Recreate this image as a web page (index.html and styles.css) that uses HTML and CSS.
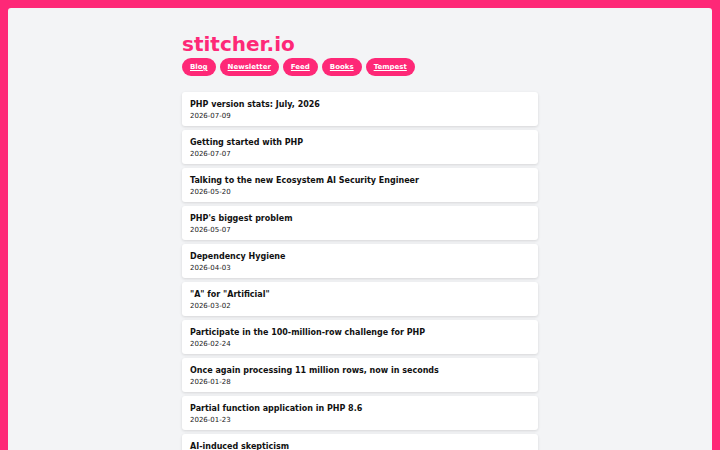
FILE: index.html
```html
<!DOCTYPE html>
<html lang="en">
<head>
    <meta charset="UTF-8">
    <meta name="viewport" content="width=device-width, initial-scale=1.0">
    <title>stitcher.io</title>
    <link rel="stylesheet" href="styles.css">
</head>
<body>
    <div class="frame">
        <div class="container">
            <header>
                <h1>stitcher.io</h1>
                <nav class="menu">
                    <a href="#">Blog</a>
                    <a href="#">Newsletter</a>
                    <a href="#">Feed</a>
                    <a href="#">Books</a>
                    <a href="#">Tempest</a>
                </nav>
            </header>

            <div class="posts">
                <a class="post" href="#">
                    <div class="post-title">PHP version stats: July, 2026</div>
                    <div class="post-date">2026-07-09</div>
                </a>
                <a class="post" href="#">
                    <div class="post-title">Getting started with PHP</div>
                    <div class="post-date">2026-07-07</div>
                </a>
                <a class="post" href="#">
                    <div class="post-title">Talking to the new Ecosystem AI Security Engineer</div>
                    <div class="post-date">2026-05-20</div>
                </a>
                <a class="post" href="#">
                    <div class="post-title">PHP's biggest problem</div>
                    <div class="post-date">2026-05-07</div>
                </a>
                <a class="post" href="#">
                    <div class="post-title">Dependency Hygiene</div>
                    <div class="post-date">2026-04-03</div>
                </a>
                <a class="post" href="#">
                    <div class="post-title">"A" for "Artificial"</div>
                    <div class="post-date">2026-03-02</div>
                </a>
                <a class="post" href="#">
                    <div class="post-title">Participate in the 100-million-row challenge for PHP</div>
                    <div class="post-date">2026-02-24</div>
                </a>
                <a class="post" href="#">
                    <div class="post-title">Once again processing 11 million rows, now in seconds</div>
                    <div class="post-date">2026-01-28</div>
                </a>
                <a class="post" href="#">
                    <div class="post-title">Partial function application in PHP 8.6</div>
                    <div class="post-date">2026-01-23</div>
                </a>
                <a class="post" href="#">
                    <div class="post-title">AI-induced skepticism</div>
                    <div class="post-date">2026-01-12</div>
                </a>
            </div>
        </div>
    </div>
</body>
</html>
```

FILE: styles.css
```css
*{margin:0;padding:0;box-sizing:border-box;font-family:"DejaVu Sans",Verdana,sans-serif}
body{background:#fe2877;padding:8px;min-height:100vh}
.frame{background:#f3f4f6;border-radius:3px;min-height:600px;padding:24px 16px 40px}
.container{max-width:356px;margin:0 auto}
header{margin-bottom:16px}
h1{font-size:20px;font-weight:bold;color:#fe2877;line-height:24px;margin-bottom:2px}
.menu{display:flex;gap:4px}
.menu a{display:block;background:#fe2877;color:#fff;font-size:7px;font-weight:bold;line-height:18px;height:18px;padding:0 8px;border-radius:9px;text-decoration:underline}
.posts{display:flex;flex-direction:column;gap:4px}
.post{display:block;background:#fff;border-radius:3px;padding:7px 8px 5px;color:#111;text-decoration:none;box-shadow:0 1px 3px rgba(0,0,0,0.12)}
.post-title{font-size:8px;font-weight:bold;line-height:12px}
.post-date{font-size:7px;line-height:10px;color:#222}
```
